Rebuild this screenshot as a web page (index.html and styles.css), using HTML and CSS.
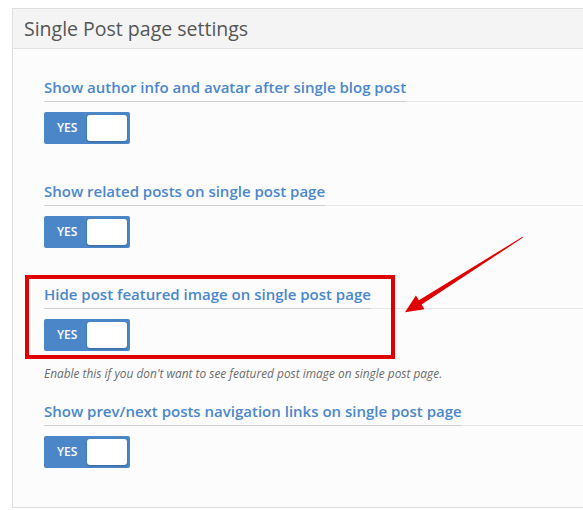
FILE: index.html
```html
<!DOCTYPE html>
<html>
<head>
<meta charset="utf-8">
<link rel="stylesheet" href="styles.css">
</head>
<body>
<div class="panel">
  <div class="panel-head">Single Post page settings</div>
  <div class="panel-body">
    <div class="field">
      <h4 class="field-label"><span>Show author info and avatar after single blog post</span></h4>
      <div class="toggle"><span class="toggle-text">YES</span><span class="knob"></span></div>
    </div>
    <div class="field">
      <h4 class="field-label"><span>Show related posts on single post page</span></h4>
      <div class="toggle"><span class="toggle-text">YES</span><span class="knob"></span></div>
    </div>
    <div class="field field-desc">
      <h4 class="field-label"><span>Hide post featured image on single post page</span></h4>
      <div class="toggle"><span class="toggle-text">YES</span><span class="knob"></span></div>
      <p class="desc">Enable this if you don't want to see featured post image on single post page.</p>
    </div>
    <div class="field field-last">
      <h4 class="field-label"><span>Show prev/next posts navigation links on single post page</span></h4>
      <div class="toggle"><span class="toggle-text">YES</span><span class="knob"></span></div>
    </div>
  </div>
</div>
<div class="highlight"></div>
<svg class="arrow" width="583" height="510" viewBox="0 0 583 510">
  <path d="M522.5,236.8 L523,237.6 L421.6,304.4 L424.5,309.2 L405,312.3 L415.9,295.6 L418.9,300.2 Z" fill="#e10000"/>
</svg>
</body>
</html>
```

FILE: styles.css
```css
html, body {
  margin: 0;
  padding: 0;
  background: #ffffff;
  overflow: hidden;
  width: 583px;
  height: 510px;
}
body {
  position: relative;
  font-family: "Open Sans", "Liberation Sans", sans-serif;
  padding: 8px 0 0 12px;
  box-sizing: border-box;
}
.panel {
  width: 571px;
  box-sizing: border-box;
  border: 1px solid #dedede;
  border-right: none;
  background: #fcfcfc;
}
.panel-head {
  height: 39px;
  line-height: 39px;
  padding-left: 11px;
  background: #f4f4f4;
  border-bottom: 1px solid #e0e0e0;
  font-size: 19.5px;
  color: #555555;
}
.panel-body {
  padding: 28px 0 39px 31px;
}
.field {
  margin-bottom: 36.5px;
}
.field-desc {
  margin-bottom: 20px;
}
.field-last {
  margin-bottom: 0;
}
.field-label {
  margin: 0 0 10px 0;
  display: flex;
  border-bottom: 1px solid #e6e6e6;
  font-size: 15px;
  font-weight: 600;
  line-height: 20px;
  color: #4a87cc;
}
.field-label span {
  padding-bottom: 4px;
  border-bottom: 1px solid #cfcfcf;
  margin-bottom: -1px;
}
.toggle {
  width: 86px;
  height: 32px;
  box-sizing: border-box;
  background: #4a86c8;
  border-radius: 2px;
  display: flex;
  align-items: center;
  padding-left: 13px;
}
.toggle-text {
  color: #ffffff;
  font-size: 12px;
  font-weight: 600;
  line-height: 14px;
}
.knob {
  margin-left: auto;
  margin-right: 3px;
  width: 40px;
  height: 26px;
  background: #ffffff;
  border-radius: 3px;
  box-shadow: 0 1px 2px rgba(0, 0, 0, 0.25);
}
.desc {
  margin: 14px 0 0 0;
  font-size: 11.9px;
  line-height: 16px;
  font-style: italic;
  color: #6b6b6b;
}
.highlight {
  position: absolute;
  left: 25px;
  top: 275px;
  width: 370px;
  height: 84px;
  box-sizing: border-box;
  border: 4px solid #e10000;
}
.arrow {
  position: absolute;
  left: 0;
  top: 0;
}
```
